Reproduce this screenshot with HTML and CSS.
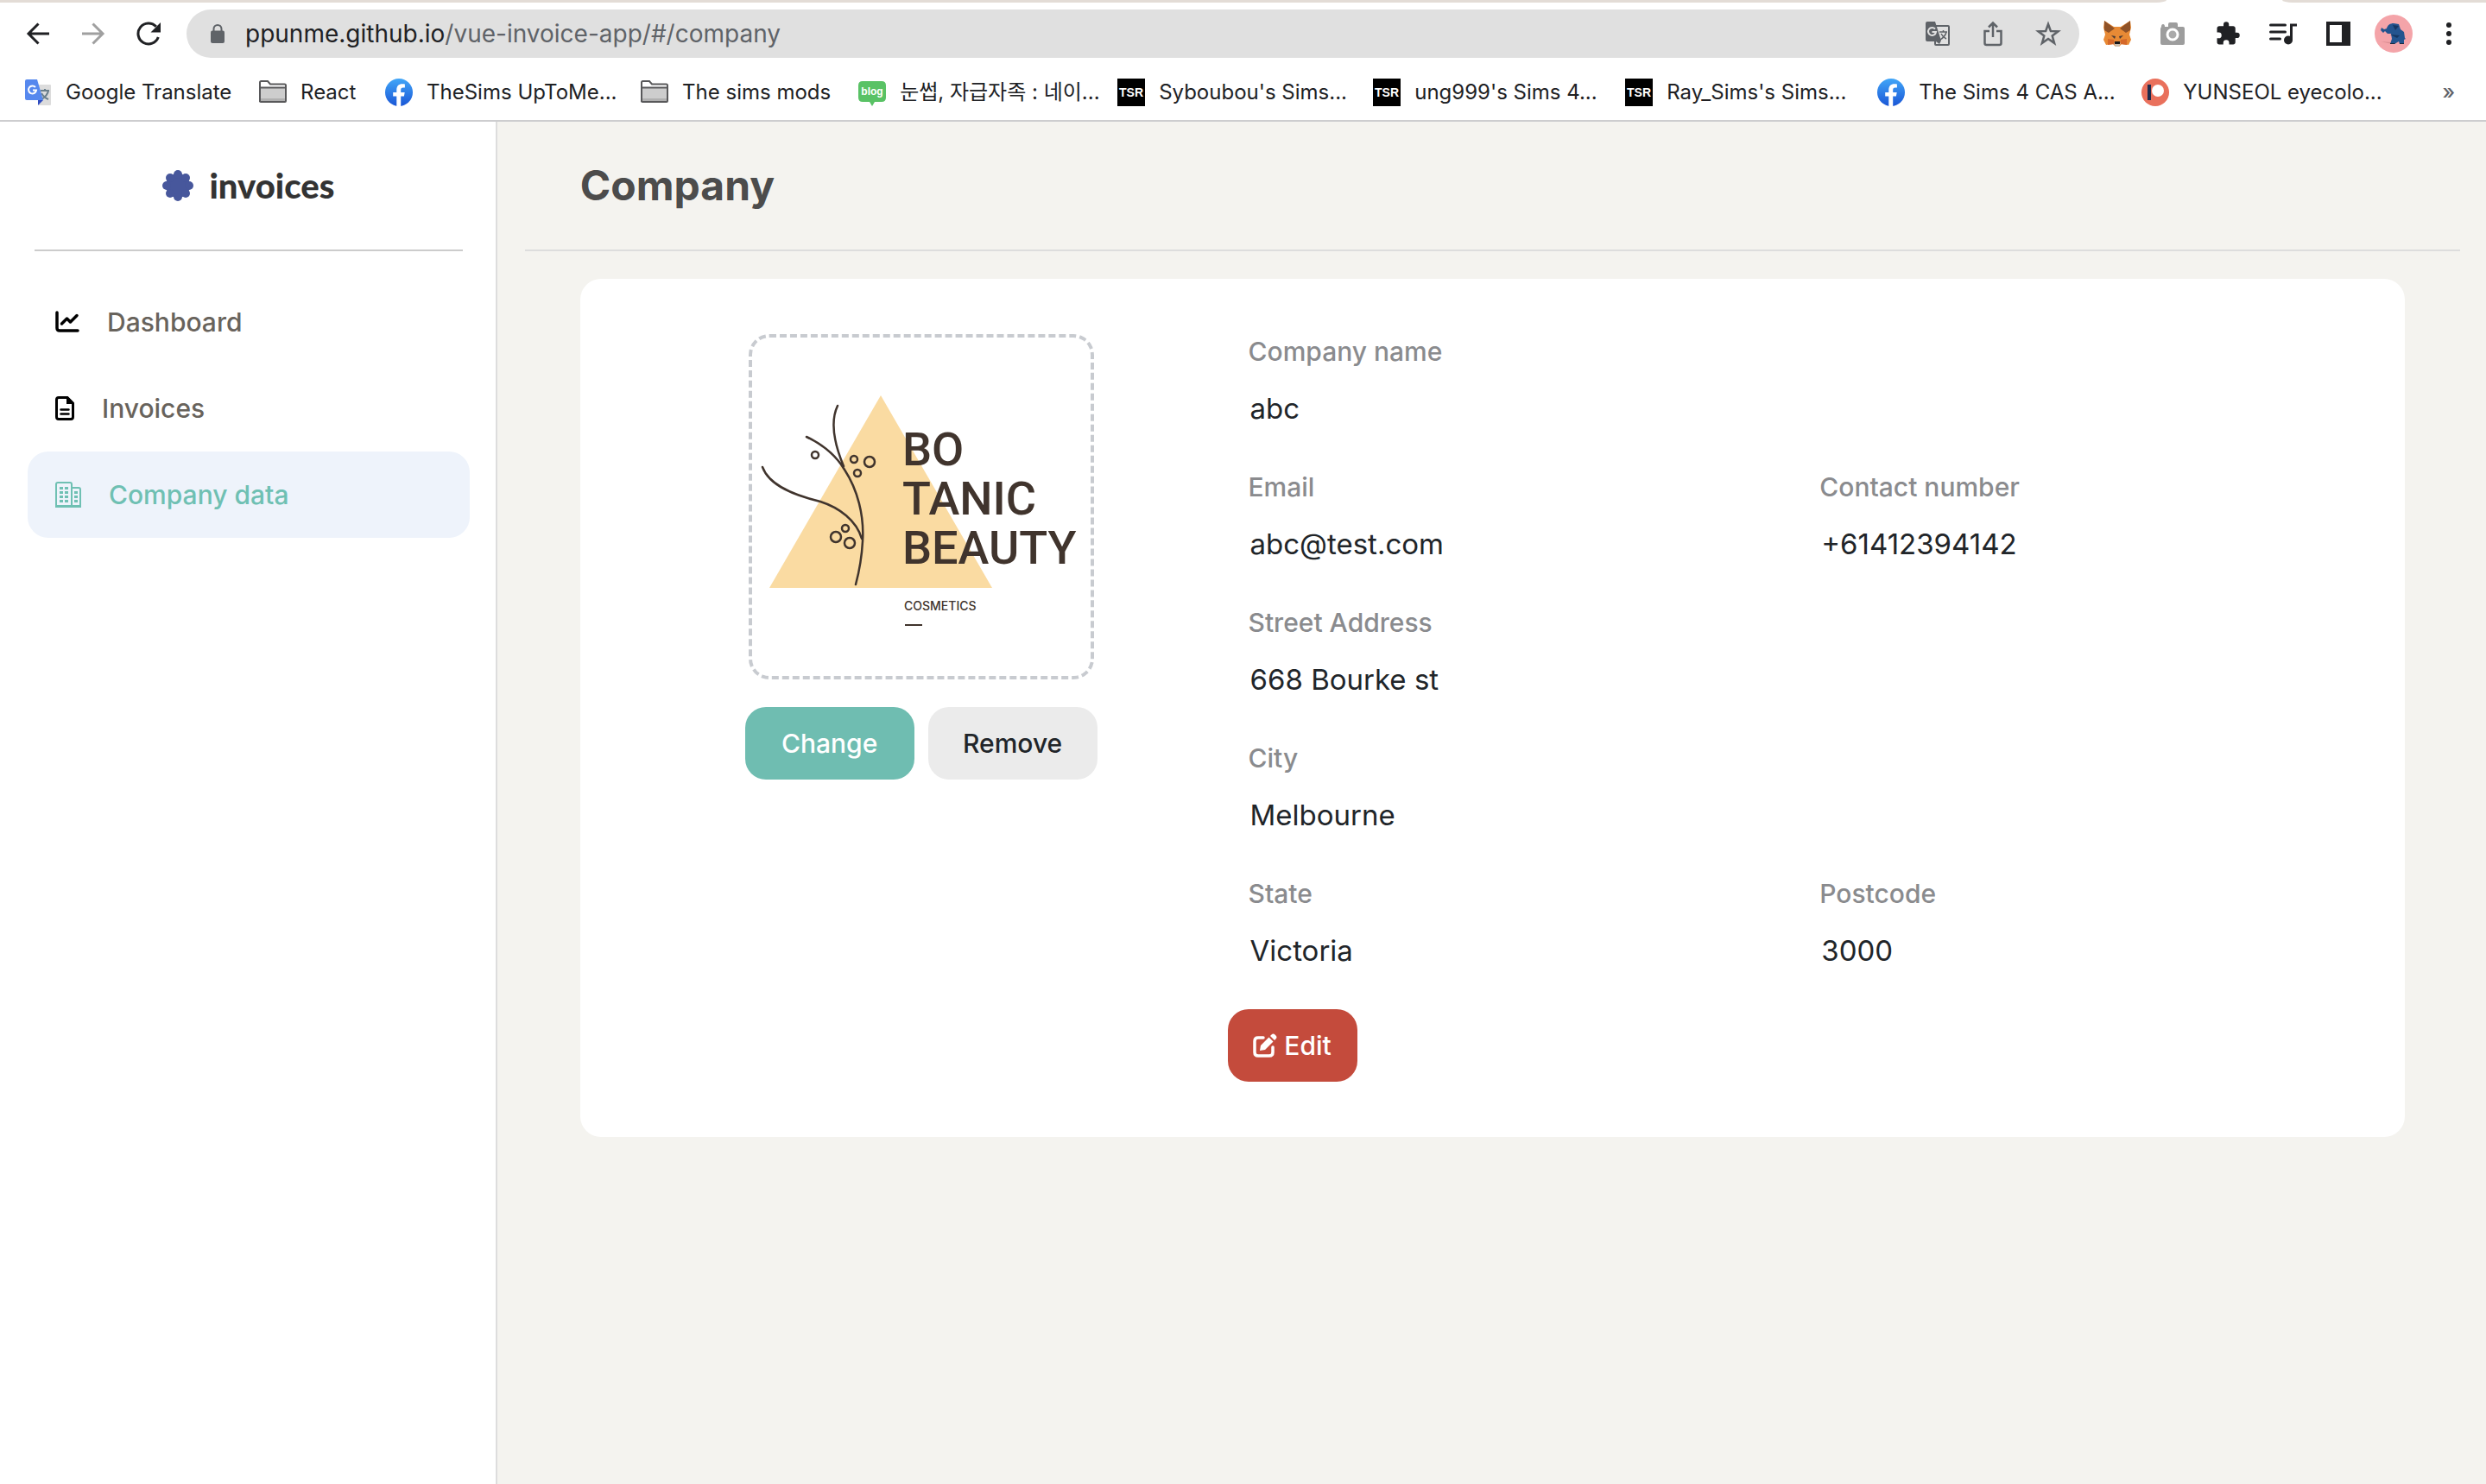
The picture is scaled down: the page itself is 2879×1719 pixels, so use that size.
FILE: index.html
```
<!DOCTYPE html>
<html lang="en">
<head>
<meta charset="utf-8">
<title>Company - Invoices</title>
<link rel="stylesheet" href="styles.css">
</head>
<body>
<svg class="defs" aria-hidden="true">
  <defs>
    <linearGradient id="blue" x1="0" y1="0" x2="0" y2="1"><stop offset="0" stop-color="#41a6f8"/><stop offset="1" stop-color="#1a56d6"/></linearGradient>
    <symbol id="folder" viewBox="0 0 32 32">
      <path d="M1 27V4.500q0-1.500 1.500-1.500H10l3 3.500h16.500Q31 6.500 31 8v18q0 1-1 1H2q-1 0-1-1z" fill="#fff" stroke="#58585a" stroke-width="2"/>
      <path d="M2 11h28v12H2z" fill="#cdcdcd"/><path d="M2 23h28v3H2z" fill="#b0b0b0"/><path d="M1 10.500h30" stroke="#58585a" stroke-width="2"/>
    </symbol>
    <symbol id="facebook" viewBox="0 0 32 32">
      <circle cx="16" cy="16" r="16" fill="url(#blue)"/>
      <path d="M13.300 32V20.500H9.200V16h4.100v-2.800c0-4.600 2.400-7 6.600-7 1.200 0 2.300.1 3 .3v4.100h-2.100c-2 0-2.600 1-2.600 2.600V16h4.500l-.8 4.500h-3.700V32z" fill="#fff"/>
    </symbol>
    <symbol id="tsr" viewBox="0 0 32 32">
      <path d="M0 0h32v32H0z" fill="#000"/>
      <text x="16" y="21" text-anchor="middle" class="tsr-text">TSR</text>
    </symbol>
  </defs>
</svg>

<header class="browser">
  <div class="tabs"><span class="tab-rest left"></span><span class="tab-rest right"></span></div>
  <div class="toolbar">
    <div class="tools">
      <button class="tool" aria-label="Back"><svg width="28" height="28" viewBox="0 0 28 28" fill="none" stroke="#202124" stroke-width="3"><path d="M27 14H3M14.500 2.500L3 14l11.500 11.500"/></svg></button>
      <button class="tool" aria-label="Forward"><svg width="28" height="28" viewBox="0 0 28 28" fill="none" stroke="#a0a0a0" stroke-width="3"><path d="M1 14h24M13.500 2.500L25 14 13.500 25.500"/></svg></button>
      <button class="tool" aria-label="Reload"><svg width="28" height="28" viewBox="0 0 28 28"><path d="M25.300 18A12 12 0 1 1 22.800 5.800" fill="none" stroke="#202124" stroke-width="3"/><path d="M28 1v11.500H16.500z" fill="#202124"/></svg></button>
    </div>
    <div class="address">
      <svg class="lock" width="16" height="22" viewBox="0 0 16 22"><rect y="7.500" width="16" height="14.500" rx="2" fill="#5f6368"/><path d="M3.500 8V5.500a4.500 4.500 0 0 1 9 0V8" fill="none" stroke="#5f6368" stroke-width="2"/></svg>
      <span class="url">ppunme.github.io<span class="path">/vue-invoice-app/#/company</span></span>
      <button class="tool" aria-label="Translate"><svg width="28" height="28" viewBox="0 0 28 28"><rect x="11" y="5" width="16" height="22" rx="1" fill="#e0e0e0" stroke="#5f6368" stroke-width="2"/><path d="M16 12h9M20.500 10v2M24 12q-1 5-7 9M18 14q2 4 6 6" fill="none" stroke="#5f6368" stroke-width="1.500"/><path d="M2 0h9l7 22-2 4-4-3H2q-2 0-2-2V2q0-2 2-2z" fill="#5f6368"/><path d="M11 8.500a4.500 4.500 0 1 0 1 3.500H7.500" fill="none" stroke="#e0e0e0" stroke-width="2"/></svg></button>
      <button class="tool" aria-label="Share"><svg width="24" height="30" viewBox="0 0 24 30" fill="none" stroke="#5f6368" stroke-width="2.500"><path d="M8 12H2.500v14q0 2 2 2h15q2 0 2-2V12H16M12 19V2.500M7 7.500l5-5 5 5"/></svg></button>
      <button class="tool" aria-label="Bookmark"><svg width="30" height="30" viewBox="0 0 30 30" fill="none" stroke="#5f6368" stroke-width="2.500"><path d="M15 4l2.900 8 8.600.3-6.800 5.200 2.400 8.400L15 21l-7.100 4.900 2.400-8.400-6.800-5.200 8.600-.3z"/></svg></button>
    </div>
    <div class="tools">
      <button class="tool" aria-label="Wallet"><svg width="32" height="30" viewBox="0 0 32 30"><path d="M1 0l11 7h8l11-7 1 8-2 8 2 6-3 6-8-1-3 3h-4l-3-3-8 1-3-6 2-6-2-8z" fill="#e88a35"/><path d="M1 0l12 9-7 5-5-3zM31 0L19 9l7 5 5-3z" fill="#8f5228"/><path d="M5 21l7 1 1 5-8 1zM27 21l-7 1-1 5 8 1z" fill="#d5682a"/><path d="M9 17l5 1-1 3zM23 17l-5 1 1 3z" fill="#4a3a35"/><path d="M12 26l4-2 4 2-2 4h-4z" fill="#c9bdb1"/><path d="M13 24h6v3h-6z" fill="#17171a"/></svg></button>
      <button class="tool" aria-label="Screenshot"><svg width="30" height="28" viewBox="0 0 30 28"><path d="M2 6q0-3 2-3t2 3h4V3q0-2 2-2h7q2 0 2 2v3h6q2 0 2 2v17q0 2-2 2H3q-2 0-2-2V8z" fill="#9d9d9d"/><circle cx="15" cy="15" r="6" fill="#aaa" stroke="#fff" stroke-width="3"/></svg></button>
      <button class="tool" aria-label="Extensions"><svg width="30" height="30" viewBox="0 0 24 24"><path d="M20.500 11H19V7c0-1.100-.9-2-2-2h-4V3.500a2.500 2.500 0 0 0-5 0V5H4c-1.100 0-2 .9-2 2v3.800h1.500a2.700 2.700 0 0 1 0 5.400H2V20c0 1.100.9 2 2 2h3.800v-1.500a2.700 2.700 0 0 1 5.400 0V22H17c1.100 0 2-.9 2-2v-4h1.500a2.500 2.500 0 0 0 0-5z" fill="#202124"/></svg></button>
      <button class="tool" aria-label="Media"><svg width="32" height="28" viewBox="0 0 32 28"><path d="M1.500 4h17M1.500 12h17M1.500 20h11" stroke="#202124" stroke-width="3" stroke-linecap="round"/><circle cx="22" cy="21.500" r="5" fill="#202124"/><path d="M25.500 22V4H32" fill="none" stroke="#202124" stroke-width="3"/></svg></button>
      <button class="tool" aria-label="Side panel"><svg width="28" height="28" viewBox="0 0 28 28"><path d="M0 0h28v28H0zM4 4v20h14V4z" fill="#202124" fill-rule="evenodd"/></svg></button>
      <button class="tool" aria-label="Profile"><svg width="44" height="44" viewBox="0 0 44 44"><circle cx="22" cy="22" r="22" fill="#f4a4a9"/><path d="M7 31l12 1 1 2z" fill="#d98d91"/><path d="M8 15l3 2 3-1c1-4 4-6 8-6l6 1 2 6 4 3 1 7 1 1-2 1v5h-5l-1-3-5 3h-5l2-6-1-6h-4l-3-3-2 2-3-3z" fill="#23548f"/><path d="M18 23l11 1-3 3zM21 12l7 1-4 5z" fill="#153763"/><path d="M18 33h5l1 1h-6zM29 33h5v1h-5z" fill="#1b2a40"/></svg></button>
      <button class="tool" aria-label="Menu"><svg width="6" height="26" viewBox="0 0 6 26" fill="#202124"><circle cx="3" cy="3" r="3"/><circle cx="3" cy="13" r="3"/><circle cx="3" cy="23" r="3"/></svg></button>
    </div>
  </div>
  <nav class="bookmarks" aria-label="Bookmarks">
    <a href="#"><svg class="icon" viewBox="0 0 32 32"><path d="M15 7h15q1 0 1 1v22q0 1-1 1H17z" fill="#dcdcdc"/><path d="M19 14h10M24 12v2M28 14q-1 6-8 10M20 17q3 5 8 7" fill="none" stroke="#6a7f8c" stroke-width="2"/><path d="M16 25h6l-6 6z" fill="#2f4cc0"/><path d="M3 1h12l7 24H3q-2 0-2-2V3q0-2 2-2z" fill="#5688ee"/><path d="M13 10a4.500 4.500 0 1 0 1 3.500h-4" fill="none" stroke="#fff" stroke-width="2"/></svg>Google Translate</a>
    <a href="#"><svg class="icon"><use href="#folder"/></svg>React</a>
    <a href="#"><svg class="icon"><use href="#facebook"/></svg>TheSims UpToMe...</a>
    <a href="#"><svg class="icon"><use href="#folder"/></svg>The sims mods</a>
    <a href="#"><svg class="icon" viewBox="0 0 32 32"><path d="M5 3h22q5 0 5 5v14q0 5-5 5h-8l-3 5-3-5H5q-5 0-5-5V8q0-5 5-5z" fill="#59c265"/><text x="16" y="19" text-anchor="middle" class="blog-text">blog</text></svg>눈썹, 자급자족 : 네이...</a>
    <a href="#"><svg class="icon"><use href="#tsr"/></svg>Syboubou's Sims...</a>
    <a href="#"><svg class="icon"><use href="#tsr"/></svg>ung999's Sims 4...</a>
    <a href="#"><svg class="icon"><use href="#tsr"/></svg>Ray_Sims's Sims...</a>
    <a href="#"><svg class="icon"><use href="#facebook"/></svg>The Sims 4 CAS A...</a>
    <a href="#"><svg class="icon" viewBox="0 0 32 32"><circle cx="16" cy="16" r="16" fill="#e9705c"/><path d="M7 7h4v18H7z" fill="#1d2b4d"/><circle cx="19" cy="14" r="7" fill="#fff"/></svg>YUNSEOL eyecolo...</a>
    <button class="more" aria-label="More bookmarks">»</button>
  </nav>
</header>

<div class="app">
  <aside class="sidebar">
    <a class="brand" href="#">
      <svg width="36" height="36" viewBox="0 0 36 36" fill="#47579c"><circle cx="18" cy="18" r="14"/><circle cx="18" cy="5" r="5"/><circle cx="27" cy="9" r="5"/><circle cx="31" cy="18" r="5"/><circle cx="27" cy="27" r="5"/><circle cx="18" cy="31" r="5"/><circle cx="9" cy="27" r="5"/><circle cx="5" cy="18" r="5"/><circle cx="9" cy="9" r="5"/></svg>
      invoices
    </a>
    <nav class="menu" aria-label="Main">
      <a href="#"><svg width="28" height="28" viewBox="0 0 28 28" fill="none" stroke="#000" stroke-width="3.500" stroke-linecap="round" stroke-linejoin="round"><path d="M2 3v18q0 3 3 3h21M7.500 16l6-6 4 4L25 6.500"/></svg>Dashboard</a>
      <a href="#"><svg width="22" height="28" viewBox="0 0 22 28"><path d="M4 1.500h10l6.500 6.500v16q0 2.500-2.500 2.500H4q-2.500 0-2.500-2.500V4q0-2.500 2.500-2.500z" fill="none" stroke="#000" stroke-width="3"/><path d="M13 1h2l6 6v2h-8z"/><path d="M6.500 15.500h9M6.500 20.500h9" stroke="#000" stroke-width="2.500" stroke-linecap="round"/></svg>Invoices</a>
      <a href="#" class="active" aria-current="page"><svg width="30" height="30" viewBox="0 0 30 30" fill="none" stroke="#6fc0b3" stroke-width="2"><path d="M1 29V3q0-2 2-2h14q2 0 2 2v26zM19 7h8q2 0 2 2v20H19M1 28h28"/><path d="M7 6v18M13 6v18M24 11v13" stroke-width="4" stroke-dasharray="3 2"/></svg>Company data</a>
    </nav>
  </aside>

  <main class="content">
    <div class="heading"><h1>Company</h1></div>
    <section class="card">
      <div class="logo-column">
        <div class="logo-frame">
          <svg class="logo" viewBox="0 0 392 392" role="img" aria-label="Botanic Beauty Cosmetics">
            <path d="M149 67l129 223H20z" fill="#fadba2"/>
            <g fill="none" stroke="#40342d" stroke-width="2.500" stroke-linecap="round">
              <path d="M99 79C90 98 96 125 106 149M63 115C82 124 98 138 107 153C122 176 130 206 128 236C127 255 124 271 120 286M12 150C20 172 50 183 79 190C101 197 121 212 127 233"/>
              <circle cx="73" cy="136" r="4"/><circle cx="118" cy="141" r="4"/><circle cx="136" cy="144" r="6"/><circle cx="122" cy="157" r="4"/>
              <circle cx="108" cy="221" r="4"/><circle cx="97" cy="231" r="6"/><circle cx="113" cy="238" r="6"/>
              <path d="M177 333h20" stroke-width="2" stroke-linecap="butt"/>
            </g>
            <g class="logo-name"><text x="174" y="148">BO</text><text x="174" y="205">TANIC</text><text x="174" y="262">BEAUTY</text></g>
            <text x="176" y="316" class="logo-tag">COSMETICS</text>
          </svg>
        </div>
        <div class="logo-actions">
          <button class="btn change">Change</button>
          <button class="btn remove">Remove</button>
        </div>
      </div>
      <div class="details">
        <dl class="fields">
          <div class="field wide"><dt>Company name</dt><dd>abc</dd></div>
          <div class="field"><dt>Email</dt><dd>abc@test.com</dd></div>
          <div class="field"><dt>Contact number</dt><dd>+61412394142</dd></div>
          <div class="field wide"><dt>Street Address</dt><dd>668 Bourke st</dd></div>
          <div class="field wide"><dt>City</dt><dd>Melbourne</dd></div>
          <div class="field"><dt>State</dt><dd>Victoria</dd></div>
          <div class="field"><dt>Postcode</dt><dd>3000</dd></div>
        </dl>
        <button class="btn edit">
          <svg width="28" height="28" viewBox="0 0 28 28"><path d="M12 5H6Q2 5 2 9v13q0 4 4 4h13q4 0 4-4v-6" fill="none" stroke="#fff" stroke-width="3.500" stroke-linecap="round"/><path d="M8 20l1-6L18.500 4.500l5 5L14 19zM20 3l1.500-1.500q2-2 4 0l1 1q2 2 0 4L25 8z" fill="#fff"/></svg>
          Edit
        </button>
      </div>
    </section>
  </main>
</div>
</body>
</html>
```
FILE: styles.css
```
* { box-sizing: border-box; }

body {
  margin: 0;
  min-height: 100vh;
  display: flex;
  flex-direction: column;
  background: #fff;
  color: #212529;
  font-family: Inter, "Noto Sans CJK KR", sans-serif;
}

a { color: inherit; text-decoration: none; }
button { border: 0; padding: 0; background: none; color: inherit; font: inherit; }
svg { flex: none; display: block; }
.defs { position: absolute; width: 0; height: 0; }

/* Browser bar */
.browser { border-bottom: 2px solid #cdcdcf; }
.tabs { display: flex; justify-content: space-between; gap: 134px; height: 3px; }
.tab-rest { background: #e3dcd6; }
.left { flex: 1; border-bottom-right-radius: 12px 3px; }
.right { width: 236px; border-bottom-left-radius: 12px 3px; }
.toolbar { display: flex; align-items: center; gap: 12px; padding: 8px 11px 0 12px; }
.tools { display: flex; }
.tool { width: 64px; height: 56px; display: flex; align-items: center; justify-content: center; }
.address {
  flex: 1;
  display: flex;
  align-items: center;
  padding: 0 4px 0 28px;
  border-radius: 28px;
  background: #e0e0e0;
  font-size: 28px;
}
.url { flex: 1; margin-left: 24px; color: #202124; }
.path { color: #5f6368; }
.bookmarks {
  display: grid;
  grid-template-columns: 272fr 146fr 296fr 252fr 300fr 296fr 292fr 292fr 306fr 348fr 14fr;
  align-items: center;
  height: 72px;
  padding: 8px 36px 0 28px;
  color: #202124;
  font-size: 24px;
  line-height: 32px;
  white-space: nowrap;
}
.bookmarks a { display: flex; align-items: center; gap: 16px; }
.icon { width: 32px; height: 32px; }
.more { color: #5f6368; font-weight: 500; }
.tsr-text { fill: #fff; font: 900 14px "Liberation Sans", sans-serif; }
.blog-text { fill: #fff; font: 700 12px "Liberation Sans", sans-serif; }

/* Layout */
.app { flex: 1; display: grid; grid-template-columns: 1fr 4fr; }

/* Sidebar */
.sidebar { border-right: 2px solid #ddd; padding: 0 30px 0 32px; }
.brand {
  display: flex;
  align-items: center;
  justify-content: center;
  gap: 18px;
  height: 150px;
  margin: 0 8px;
  border-bottom: 2px solid #ccc;
  color: #333;
  font: 900 40px Lato, sans-serif;
}
.menu { margin-top: 32px; color: #68635c; font-size: 30px; font-weight: 500; }
.menu a {
  display: flex;
  align-items: center;
  gap: 32px;
  height: 100px;
  padding: 0 32px;
  border-radius: 24px;
}
.menu .active { background: #eef3fb; color: #6fc0b3; }

/* Content */
.content { padding: 0 30px 0 32px; background: #f4f3ef; }
.heading { height: 150px; display: flex; align-items: center; padding: 0 64px; border-bottom: 2px solid #ddd; }
h1 { margin: 0; color: #4c4c4c; font-size: 48px; font-weight: 700; line-height: 60px; }
.card {
  display: grid;
  grid-template-columns: 1fr 2fr;
  margin: 32px 64px;
  padding: 64px;
  border-radius: 24px;
  background: #fff;
}
.logo-column { display: flex; flex-direction: column; align-items: center; gap: 32px; }
.logo-frame { width: 400px; height: 400px; border: 4px dashed #c8cbd0; border-radius: 24px; }
.logo { width: 100%; height: 100%; }
.logo-name { fill: #40342d; font: 500 54px Roboto, sans-serif; }
.logo-tag { fill: #40342d; font: 500 14px Inter, sans-serif; }
.logo-actions { display: flex; gap: 16px; }

.btn {
  display: flex;
  align-items: center;
  justify-content: center;
  gap: 8px;
  height: 84px;
  border-radius: 24px;
  font-size: 30px;
  font-weight: 500;
}
.change { width: 196px; background: #6fbdb1; color: #fff; }
.remove { width: 196px; background: #ebebeb; }
.edit { width: 150px; background: #c44b3c; color: #fff; }

.details { padding-left: 24px; }
.fields { display: grid; grid-template-columns: 1fr 1fr; row-gap: 47px; margin: 0 -24px 44px 0; }
.field { padding-left: 24px; }
.wide { grid-column: 1 / -1; }
dt { margin-bottom: 22px; color: #8a8b8e; font-size: 30px; font-weight: 500; line-height: 40px; }
dd { margin: 0; padding-left: 2px; font-size: 33px; line-height: 48px; }
```
